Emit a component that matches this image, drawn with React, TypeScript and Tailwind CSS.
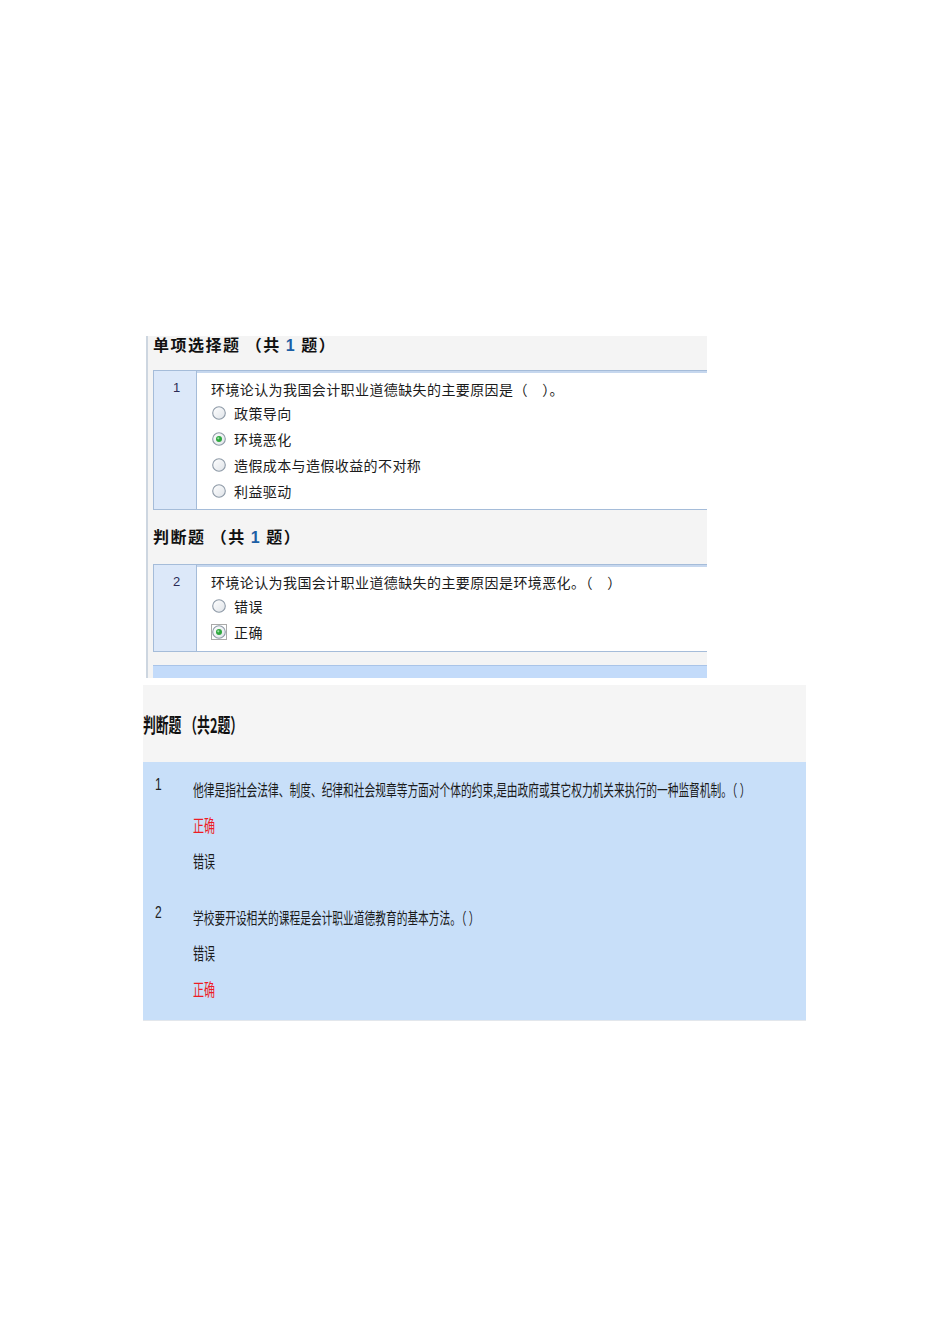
import React from 'react';

const CJK = "font-['Noto_Sans_CJK_SC','Noto_Sans',sans-serif]";
const NUM = "font-['Liberation_Sans',sans-serif]";

function Radio({ checked = false, focused = false }: { checked?: boolean; focused?: boolean }) {
  return (
    <svg width="16" height="16" viewBox="0 0 16 16" className="shrink-0">
      <defs>
        <linearGradient id="rg" x1="0" y1="0" x2="1" y2="1">
          <stop offset="0" stopColor="#ffffff" />
          <stop offset="1" stopColor="#dfe3e8" />
        </linearGradient>
      </defs>
      {focused && (
        <rect x="0.5" y="0.5" width="15" height="15" fill="none" stroke="#555" strokeWidth="1" strokeDasharray="1 1" />
      )}
      <circle cx="8" cy="8" r="6.3" fill="url(#rg)" stroke="#8e9aa7" strokeWidth="1.1" />
      {checked && (
        <>
          <circle cx="8" cy="8" r="3" fill="#2fa83f" />
          <circle cx="7.3" cy="7.3" r="1.1" fill="#9be3a4" />
        </>
      )}
    </svg>
  );
}

function Option({ label, checked, focused }: { label: string; checked?: boolean; focused?: boolean }) {
  return (
    <div className="flex h-[26px] items-center gap-[7px]">
      <Radio checked={checked} focused={focused} />
      <span className="text-[14px] tracking-[0.4px] text-[#1b1b1b]">{label}</span>
    </div>
  );
}

function Squeeze({ children, className = '' }: { children: React.ReactNode; className?: string }) {
  return (
    <span className={`inline-block origin-left whitespace-nowrap ${className}`}>{children}</span>
  );
}

const judgments = [
  {
    no: '1',
    text: '他律是指社会法律、制度、纪律和社会规章等方面对个体的约束,是由政府或其它权力机关来执行的一种监督机制。（ ）',
    options: [
      { label: '正确', right: true },
      { label: '错误', right: false },
    ],
  },
  {
    no: '2',
    text: '学校要开设相关的课程是会计职业道德教育的基本方法。（ ）',
    options: [
      { label: '错误', right: false },
      { label: '正确', right: true },
    ],
  },
];

export default function App() {
  return (
    <div className={`w-[950px] h-[1344px] overflow-hidden bg-white pt-[336px] ${CJK}`}>
      {/* first screenshot */}
      <div className="ml-[146px] w-[561px] border-l-2 border-[#cdd6e0] bg-[#f4f4f4]">
        <div className="h-[34px] pl-[5px]">
          <div className="text-[16px] font-bold leading-[16px] tracking-[1.5px] text-[#111]">
            单项选择题 （共 <span className={`${NUM} text-[#1c5fa5]`}>1</span> 题）
          </div>
        </div>

        <div className="ml-[5px] flex h-[140px] border-y border-l border-[#a5bcd9]">
          <div className={`w-[43px] shrink-0 border-r border-[#a5bcd9] bg-[#dce8f9] pl-[3px] pt-[7px] text-center text-[13px] text-[#2b2b55] ${NUM}`}>
            1
          </div>
          <div className="flex-1 border-t-2 border-[#c6d7ee] bg-white pl-[14px] pt-[5px]">
            <div className="flex h-[22px] items-center text-[14px] tracking-[0.4px] text-[#1b1b1b]">
              环境论认为我国会计职业道德缺失的主要原因是（　）。
            </div>
            <Option label="政策导向" />
            <Option label="环境恶化" checked />
            <Option label="造假成本与造假收益的不对称" />
            <Option label="利益驱动" />
          </div>
        </div>

        <div className="flex h-[54px] items-center pl-[5px]">
          <div className="text-[16px] font-bold tracking-[1.5px] text-[#111]">
            判断题 （共 <span className={`${NUM} text-[#1c5fa5]`}>1</span> 题）
          </div>
        </div>

        <div className="ml-[5px] flex h-[88px] border-y border-l border-[#a5bcd9]">
          <div className={`w-[43px] shrink-0 border-r border-[#a5bcd9] bg-[#dce8f9] pl-[3px] pt-[7px] text-center text-[13px] text-[#2b2b55] ${NUM}`}>
            2
          </div>
          <div className="flex-1 border-t-2 border-[#c6d7ee] bg-white pl-[14px] pt-[4px]">
            <div className="flex h-[22px] items-center text-[14px] tracking-[0.4px] text-[#1b1b1b]">
              环境论认为我国会计职业道德缺失的主要原因是环境恶化。（　）
            </div>
            <Option label="错误" />
            <Option label="正确" checked focused />
          </div>
        </div>

        <div className="h-[13px]" />
        <div className="ml-[5px] h-[13px] border-t border-[#a9c4e8] bg-[#c3dbfa]" />
      </div>

      {/* second screenshot */}
      <div className="ml-[143px] mt-[7px] w-[663px] overflow-hidden">
        <div className="flex h-[77px] items-center bg-[#f5f5f5] pt-[3px]">
          <Squeeze className="scale-x-[0.64] text-[20px] font-bold text-[#111]">
            判断题 （共2题）
          </Squeeze>
        </div>
        <div className="h-[259px] border-b border-[#e3e7ec] bg-[#c8dff9] pt-[9px]">
          {judgments.map((q, i) => (
            <div key={q.no} className={`flex ${i > 0 ? 'mt-[20px]' : ''}`}>
              <div className={`w-[50px] shrink-0 pl-[12px] pt-[4px] text-[16px] leading-[20px] text-[#222] ${NUM}`}>
                <Squeeze className="scale-x-[0.75]">{q.no}</Squeeze>
              </div>
              <div className="min-w-0 flex-1 overflow-hidden">
                <div className="flex h-[36px] items-center text-[16px] text-[#1a1a1a]">
                  <Squeeze className="scale-x-[0.67]">{q.text}</Squeeze>
                </div>
                {q.options.map((o) => (
                  <div key={o.label} className="flex h-[36px] items-center text-[17px]">
                    <Squeeze className={`scale-x-[0.65] ${o.right ? 'text-[#ee1c25]' : 'text-[#1a1a1a]'}`}>
                      {o.label}
                    </Squeeze>
                  </div>
                ))}
              </div>
            </div>
          ))}
        </div>
      </div>
    </div>
  );
}
